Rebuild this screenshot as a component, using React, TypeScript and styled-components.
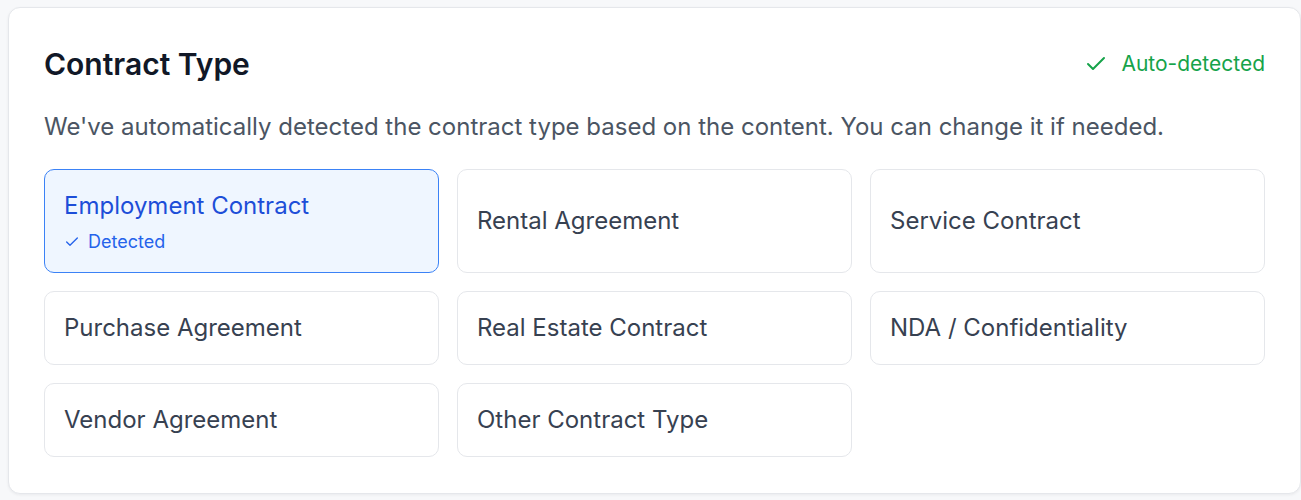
import React from "react";
import styled, { createGlobalStyle } from "styled-components";

const GlobalStyle = createGlobalStyle`
  html, body { margin: 0; padding: 0; background: #f7f8fa; }
  body { font-family: Inter, "Noto Sans", "Liberation Sans", sans-serif; -webkit-font-smoothing: antialiased; }
  #root { padding: 7px 0 7px 8px; }
  * { box-sizing: border-box; }
`;

const Panel = styled.section`
  width: 1293px;
  background: #ffffff;
  border: 1px solid #e5e7eb;
  border-radius: 12px;
  box-shadow: 0 1px 3px rgba(16, 24, 40, 0.06);
  padding: 35px 35px 36px;
`;

const Header = styled.div`
  display: flex;
  align-items: center;
  justify-content: space-between;
  height: 42px;
`;

const Title = styled.h2`
  margin: 0;
  font-size: 30px;
  line-height: 42px;
  font-weight: 600;
  color: #111827;
`;

const Badge = styled.div`
  display: flex;
  align-items: center;
  gap: 13px;
  color: #16a34a;
  font-size: 21px;
  line-height: 30px;
`;

const Description = styled.p`
  margin: 24px 0;
  font-size: 24px;
  line-height: 36px;
  color: #4b5563;
`;

const Grid = styled.div`
  display: grid;
  grid-template-columns: repeat(3, 1fr);
  gap: 18px;
`;

const Option = styled.button<{ $selected?: boolean }>`
  display: flex;
  flex-direction: column;
  justify-content: center;
  align-items: flex-start;
  text-align: left;
  min-height: 74px;
  padding: 18px 19px;
  border-radius: 10px;
  border: 1px solid ${(p) => (p.$selected ? "#3b82f6" : "#e5e7eb")};
  background: ${(p) => (p.$selected ? "#eff6ff" : "#ffffff")};
  font-family: inherit;
  cursor: pointer;
`;

const OptionLabel = styled.span<{ $selected?: boolean }>`
  font-size: 24px;
  line-height: 36px;
  color: ${(p) => (p.$selected ? "#1d4ed8" : "#374151")};
`;

const DetectedTag = styled.span`
  display: flex;
  align-items: center;
  gap: 8px;
  margin-top: 6px;
  font-size: 18px;
  line-height: 24px;
  color: #2563eb;
`;

const Check = ({ size, width, color }: { size: number; width: number; color: string }) => (
  <svg width={size} height={size} viewBox="0 0 24 24" fill="none" stroke={color} strokeWidth={width} strokeLinecap="round" strokeLinejoin="round">
    <path d="M20 6 9 17l-5-5" />
  </svg>
);

const options = [
  "Employment Contract",
  "Rental Agreement",
  "Service Contract",
  "Purchase Agreement",
  "Real Estate Contract",
  "NDA / Confidentiality",
  "Vendor Agreement",
  "Other Contract Type",
];

export default function App() {
  return (
    <>
      <GlobalStyle />
      <Panel>
        <Header>
          <Title>Contract Type</Title>
          <Badge>
            <Check size={24} width={2} color="#16a34a" />
            Auto-detected
          </Badge>
        </Header>
        <Description>
          We've automatically detected the contract type based on the content. You can change it if needed.
        </Description>
        <Grid>
          {options.map((o, i) => (
            <Option key={o} $selected={i === 0}>
              <OptionLabel $selected={i === 0}>{o}</OptionLabel>
              {i === 0 && (
                <DetectedTag>
                  <Check size={16} width={2} color="#2563eb" />
                  Detected
                </DetectedTag>
              )}
            </Option>
          ))}
        </Grid>
      </Panel>
    </>
  );
}
